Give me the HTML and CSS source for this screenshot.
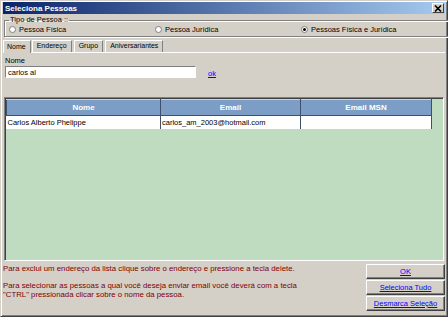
FILE: index.html
```html
<!DOCTYPE html>
<html lang="pt">
<head>
    <meta charset="UTF-8">
    <title>Seleciona Pessoas</title>
    <link rel="stylesheet" href="styles.css">
</head>
<body>
    <div class="window">
        <div class="titlebar">
            <span class="title">Seleciona Pessoas</span>
            <span class="close-btn">
                <svg width="8" height="7" viewBox="0 0 8 7"><path d="M1 0.5 L7 6.5 M7 0.5 L1 6.5" stroke="#000" stroke-width="1.6"/></svg>
            </span>
        </div>

        <fieldset class="groupbox">
            <legend>Tipo de Pessoa ::</legend>
            <div class="radio-row">
                <label class="radio"><span class="radio-dot"></span>Pessoa Física</label>
                <label class="radio"><span class="radio-dot"></span>Pessoa Jurídica</label>
                <label class="radio"><span class="radio-dot checked"></span>Pessoas Física e Jurídica</label>
            </div>
        </fieldset>

        <div class="tabs">
            <span class="tab active">Nome</span>
            <span class="tab">Endereço</span>
            <span class="tab">Grupo</span>
            <span class="tab">Aniversariantes</span>
        </div>
        <div class="tab-panel">
            <div class="field-label">Nome</div>
            <div class="search-row">
                <div class="text-input">carlos al</div>
                <a class="link ok-link">ok</a>
            </div>
        </div>

        <div class="grid">
            <table>
                <thead>
                    <tr>
                        <th class="col-nome">Nome</th>
                        <th class="col-email">Email</th>
                        <th class="col-msn">Email MSN</th>
                    </tr>
                </thead>
                <tbody>
                    <tr>
                        <td>Carlos Alberto Phelippe</td>
                        <td>carlos_am_2003@hotmail.com</td>
                        <td></td>
                    </tr>
                </tbody>
            </table>
        </div>

        <div class="footer">
            <div class="notes">
                <p>Para exclui um endereço da lista clique sobre o endereço e pressione a tecla delete.</p>
                <p>Para selecionar as pessoas a qual você deseja enviar email você deverá com a tecla "CTRL" pressionada clicar sobre o nome da pessoa.</p>
            </div>
            <div class="buttons">
                <a class="btn link">OK</a>
                <a class="btn link">Seleciona Tudo</a>
                <a class="btn link">Desmarca Seleção</a>
            </div>
        </div>
    </div>
</body>
</html>
```

FILE: styles.css
```css
:root {
    --face: #d4d0c8;
    --light: #ffffff;
    --shadow: #808080;
    --dark: #404040;
    --grid-bg: #c0dcc0;
    --header: #7b9dc6;
    --note: #800000;
    --link: #0000ff;
}

body {
    margin: 0;
    background-color: var(--face);
    font-family: 'Liberation Sans', Arial, sans-serif;
    font-size: 7.5px;
    color: #000;
}

.window {
    width: 448px;
    height: 317px;
    box-sizing: border-box;
    border: 1px solid;
    border-color: var(--face) var(--dark) var(--dark) var(--face);
    box-shadow: inset 1px 1px 0 var(--light), inset -1px -1px 0 var(--shadow);
    padding: 1px 2px 2px 2px;
    display: flex;
    flex-direction: column;
}

.titlebar {
    height: 12px;
    flex-shrink: 0;
    display: flex;
    align-items: center;
    justify-content: space-between;
    padding: 0 1px 0 2px;
    background: linear-gradient(to right, #0a246a, #a6caf0);
}

.title {
    color: #fff;
    font-weight: bold;
    font-size: 8px;
}

.close-btn {
    width: 12px;
    height: 10px;
    box-sizing: border-box;
    background-color: var(--face);
    border: 1px solid;
    border-color: var(--light) var(--dark) var(--dark) var(--light);
    display: flex;
    align-items: center;
    justify-content: center;
}

.groupbox {
    margin: 2px 1px 0 1px;
    padding: 0 4px 1px 4px;
    border: 1px solid var(--shadow);
    box-shadow: 1px 1px 0 var(--light), inset 1px 1px 0 var(--light);
    flex-shrink: 0;
}

.groupbox legend {
    padding: 0 1px;
    line-height: 8px;
}

.radio-row {
    display: flex;
    height: 11px;
    align-items: center;
}

.radio {
    display: flex;
    align-items: center;
    gap: 3px;
    width: 146px;
}

.radio-dot {
    width: 7px;
    height: 7px;
    box-sizing: border-box;
    border-radius: 50%;
    background-color: #fff;
    border: 1px solid var(--shadow);
    display: flex;
    align-items: center;
    justify-content: center;
}

.radio-dot.checked::after {
    content: "";
    width: 3px;
    height: 3px;
    border-radius: 50%;
    background-color: #000;
}

.tabs {
    display: flex;
    margin-top: 2px;
    height: 13px;
    flex-shrink: 0;
    align-items: flex-end;
    font-size: 7px;
}

.tab {
    height: 12px;
    box-sizing: border-box;
    padding: 1px 4px 0 4px;
    border: 1px solid;
    border-bottom: none;
    border-color: var(--light) var(--shadow) transparent var(--light);
    margin-right: 2px;
}

.tab.active {
    height: 13px;
    padding: 2px 4px 0 3px;
    margin-right: 1px;
    background-color: var(--face);
    position: relative;
    top: 1px;
}

.tab-panel {
    height: 45px;
    box-sizing: border-box;
    flex-shrink: 0;
    border-top: 1px solid var(--light);
    padding: 3px 2px 0 2px;
}

.field-label {
    line-height: 9px;
}

.search-row {
    display: flex;
    align-items: center;
    gap: 12px;
}

.text-input {
    width: 191px;
    height: 12px;
    box-sizing: border-box;
    background-color: #fff;
    border: 1px solid;
    border-color: var(--shadow) var(--light) var(--light) var(--shadow);
    padding: 1px 2px;
    line-height: 9px;
}

.link {
    color: var(--link);
    text-decoration: underline;
}

.ok-link {
    margin-top: 4px;
}

.grid {
    flex: 1;
    margin: 0 1px;
    background-color: var(--grid-bg);
    border: 1px solid;
    border-color: var(--shadow) var(--light) var(--light) var(--shadow);
    box-shadow: inset 1px 1px 0 var(--dark);
    padding: 1px 0 0 1px;
}

table {
    border-collapse: collapse;
    width: 426px;
    background-color: #fff;
}

th {
    height: 15px;
    padding: 0;
    background-color: var(--header);
    color: #fff;
    font-weight: bold;
    font-size: 8px;
    text-align: center;
    border: 1px solid #40506a;
    border-top-color: #c8d4e4;
}

td {
    height: 13px;
    padding: 0 1px;
    border-right: 1px solid #40506a;
}

.col-nome { width: 153px; }
.col-email { width: 139px; }

.footer {
    height: 52px;
    flex-shrink: 0;
    display: flex;
    justify-content: space-between;
    padding-top: 1px;
}

.notes {
    color: var(--note);
    width: 300px;
    font-size: 7.8px;
}

.notes p {
    margin: 2px 0 8px 0;
    line-height: 9px;
}

.buttons {
    width: 79px;
    display: flex;
    flex-direction: column;
    gap: 1px;
    margin-top: 2px;
}

.btn {
    height: 15px;
    box-sizing: border-box;
    display: flex;
    align-items: center;
    justify-content: center;
    border: 1px solid;
    border-color: var(--light) var(--dark) var(--dark) var(--light);
    box-shadow: inset -1px -1px 0 var(--shadow);
}
```
